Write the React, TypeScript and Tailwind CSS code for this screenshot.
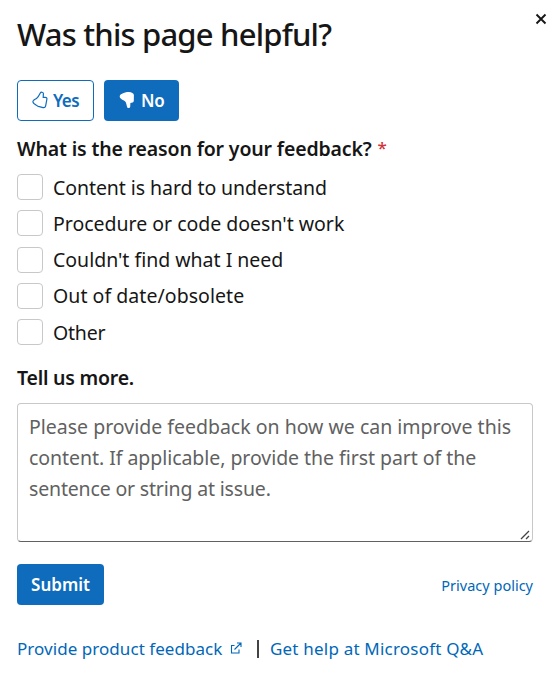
import React from "react";

const reasons = [
  { label: "Content is hard to understand", tracking: "tracking-[-0.07px]" },
  { label: "Procedure or code doesn't work", tracking: "tracking-[-0.01px]" },
  { label: "Couldn't find what I need", tracking: "tracking-[-0.01px]" },
  { label: "Out of date/obsolete", tracking: "tracking-[0.05px]" },
  { label: "Other", tracking: "tracking-[-0.2px]" },
];

const THUMB =
  "M8.300 1.900C8.800.9 11.200.9 11.400 2.500L11.200 6.300H13.300Q15.200 6.500 14.900 8.200L13.600 15.100Q13 17.100 11.100 16.600L6.300 15.400C5.300 15.100 4.800 14.500 4 13.900L1.900 12.500C.8 11.500.6 10.300 1.500 9.400C2.300 8.500 3.400 8.100 4.500 7.400C6.300 6.200 7.200 4.200 8.300 1.900Z";

export default function App() {
  return (
    <main className="relative flex h-[678px] w-[557px] flex-col overflow-hidden bg-white pl-[17px] pr-6 font-['Noto_Sans',sans-serif] text-[#161616]">
      <button aria-label="Close" className="absolute left-[535px] top-[13px]">
        <svg width="12" height="12" viewBox="0 0 12 12" stroke="#161616" strokeWidth="1.900" fill="none">
          <path d="M1.500 1.500l9 9M10.500 1.500l-9 9" />
        </svg>
      </button>
      <h1 className="mt-[14px] h-10 whitespace-nowrap text-[31px] font-[550] leading-10 tracking-[-0.800px]">Was this page helpful?</h1>

      <div className="mt-[26px] flex gap-[10px] text-[17px] font-semibold">
        <button className="flex h-[41px] w-[77px] items-center rounded border border-[#0f6cbd] pl-[14px] text-[#0f6cbd]">
          <svg className="mr-[5px] shrink-0 -translate-y-px" width="16" height="18" viewBox="0 0 16 18" fill="none" stroke="currentColor" strokeWidth="1.200">
            <path d={THUMB} />
          </svg>
          <span className="tracking-[-0.6px]">Yes</span>
        </button>
        <button className="flex h-[41px] w-[75px] items-center rounded bg-[#0f6cbd] pl-[15px] text-white">
          <svg className="mr-[6px] shrink-0 -translate-y-px -scale-y-100" width="16" height="18" viewBox="0 0 16 18" fill="currentColor">
            <path d="M8.300 1.500C9.300.5 11 1 11.200 2.300L11.400 6C13 6.300 14.500 6.500 14.800 8L14.900 14C14.700 15.700 12.500 16.800 10 17C7 17 5 16.300 3.500 15.500C1.200 14.700.3 13.300.9 11.500C1.600 9.700 4 9.500 6 7.800C7.500 6.300 7.500 3.500 8.300 1.500Z" />
          </svg>
          <span className="tracking-[-0.2px]">No</span>
        </button>
      </div>

      <h2 className="mt-[12px] flex h-8 gap-[5px] whitespace-nowrap text-[19.500px] font-semibold leading-8 tracking-[-0.15px]">
        What is the reason for your feedback? <span className="ml-px text-[17px] font-medium leading-[30px] text-[#d13438]">*</span>
      </h2>
      <div className="mt-[9px] flex flex-col gap-[10.300px]">
        {reasons.map((r) => (
          <label key={r.label} className="flex h-[26px] items-center gap-[10px] text-[19.500px]">
            <span className="size-[26px] shrink-0 rounded border border-[#c8c8c8]" />
            <span className={`whitespace-nowrap pt-px leading-[26px] ${r.tracking}`}>{r.label}</span>
          </label>
        ))}
      </div>

      <h2 className="mt-[17px] h-8 text-[19.500px] font-semibold leading-8 tracking-[-0.23px]">Tell us more.</h2>
      <div className="relative mt-[9px] h-[139px] w-[516px] rounded border border-[#c8c8c8] border-b-[#616161] pl-[11px] pt-[7px] text-[19.500px] leading-[31px] text-[#616161]">
        <div className="whitespace-nowrap tracking-[0px]">Please provide feedback on how we can improve this</div>
        <div className="whitespace-nowrap tracking-[-0.05px]">content. If applicable, provide the first part of the</div>
        <div className="whitespace-nowrap tracking-[-0.17px]">sentence or string at issue.</div>
        <svg className="absolute bottom-[1px] right-[2px]" width="10" height="10" viewBox="0 0 10 10" stroke="#444" strokeWidth="1.300" fill="none">
          <path d="M1 9l8-8M6 9l3-3" />
        </svg>
      </div>

      <div className="mt-[22px] flex h-[41px] items-center justify-between">
        <button className="h-[41px] w-[87px] rounded bg-[#0f6cbd] text-[17px] font-semibold text-white">Submit</button>
        <a className="whitespace-nowrap pt-0.5 text-[14.500px] text-[#0067b8]">Privacy policy</a>
      </div>

      <div className="mt-[28px] flex h-8 items-center whitespace-nowrap text-[17px] leading-8 text-[#0067b8]">
        <a className="w-[213px] tracking-[0.05px]">Provide product feedback</a>
        <svg className="-translate-y-px" width="12" height="12" viewBox="0 0 12 12" fill="none" stroke="currentColor" strokeWidth="1.100">
          <path d="M4.500 3.500H1.500v7.500h7.500V7.500M4.500 7.500l6.500-6.500M7 1h4v4" />
        </svg>
        <span className="ml-[15px] h-[18px] w-[2px] bg-[#444]" />
        <a className="ml-[11px] tracking-[0.200px]">Get help at Microsoft Q&amp;A</a>
      </div>
    </main>
  );
}
